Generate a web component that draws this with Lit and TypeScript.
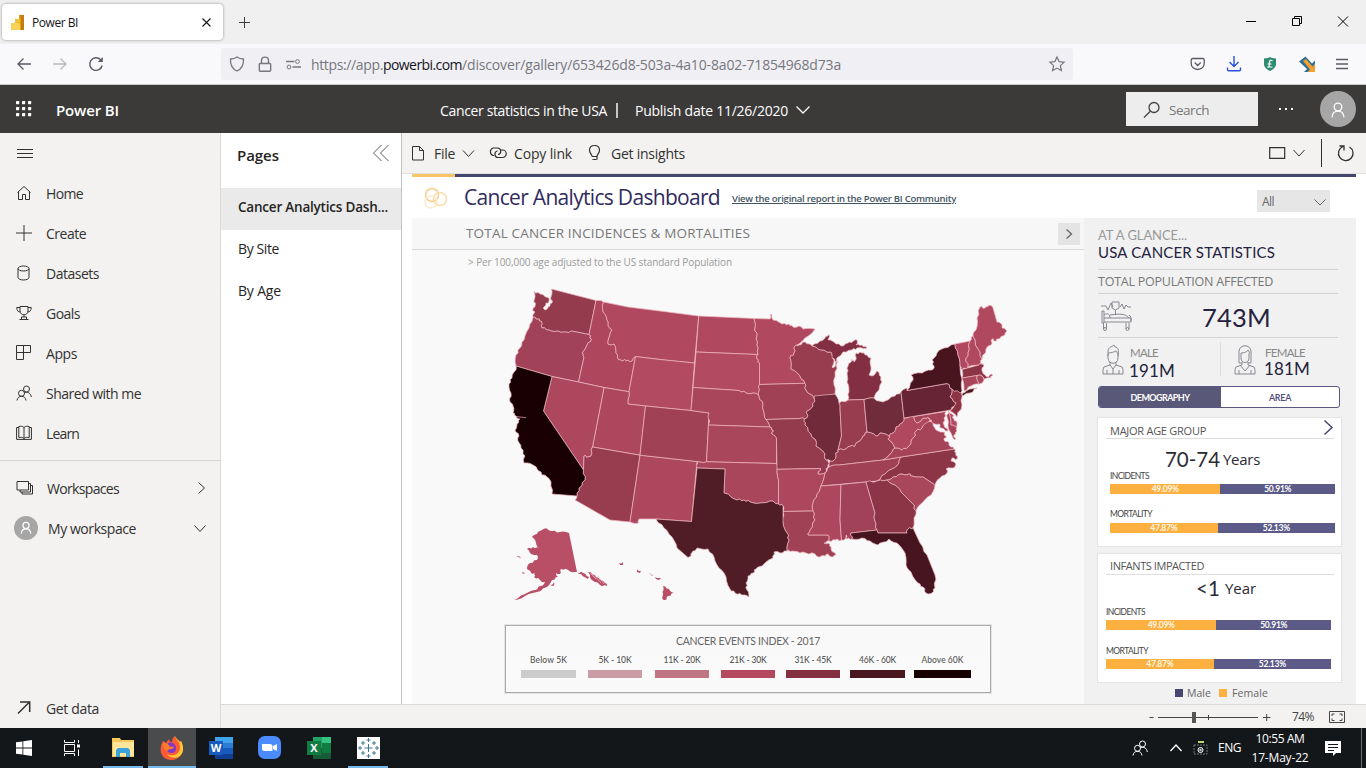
import { LitElement, html, svg, css } from "lit";
import { customElement, property } from "lit/decorators.js";

/** One line of text whose tracking is tuned so it spans a given width. */
@customElement("fit-text")
class FitText extends LitElement {
  @property() text = "";
  @property({ type: Number }) w = 0;
  static styles = css`
    :host { display: inline-block; white-space: nowrap; flex: none; }
    span { display: inline-block; }
    :host(.link) span { text-decoration: underline; text-underline-offset: 1px; }
  `;
  render() { return html`<span>${this.text}</span>`; }
  updated() {
    const s = this.renderRoot.querySelector("span") as HTMLElement;
    s.style.letterSpacing = "0px";
    const natural = s.getBoundingClientRect().width;
    if (this.w && natural) s.style.letterSpacing = `${((this.w - natural) / this.text.length).toFixed(3)}px`;
  }
}

const t = (text: string, w: number, cls = "") => html`<fit-text class=${cls} .text=${text} .w=${w}></fit-text>`;
const icon = (w: number, h: number, body: unknown, cls = "") =>
  html`<svg class="ico ${cls}" width=${w} height=${h} viewBox="0 0 ${w} ${h}">${body}</svg>`;

/* ---------- map geometry: one outline per state ---------- */
const STATES: [string, string][] = [
  ["#943b4e", "534,291.5 540,294 548,297.5 549,301 546,303 543,308 545,310 548,307 552,303 551,297 551.5,289 596,300.5 589,334.5 574,331.5 566,332 558,331 549,330 542,328 541,321 538,319 533,317.5 534.5,313 533,309 535,306 534.5,299"],
  ["#a24258", "533,317.5 538,319 541,321 542,328 549,330 558,331 566,332 574,331.5 589,334.5 591.5,339 587,345 582,353 584,357 578.5,382 552,376.5 516,366 516,355 520,348 524,340 529,328"],
  ["#ae475e", "596,300.5 603.5,302 603,312 607,320 608,325 612,330 610,335 608,344 611,345 614,344 616,353 619,360 623,360.5 628,360 632,361 635.5,356.5 629,391.7 604,387.5 578.5,382 584,357 582,353 587,345 591.5,339 589,334.5"],
  ["#b0495f", "603.5,302 628,307 660,311 698.7,316 694.5,363 660,359.5 635.5,356.5 632,361 628,360 623,360.5 619,360 616,353 614,344 611,345 608,344 610,335 612,330 608,325 607,320 603,312"],
  ["#b24b62", "635.5,356.5 660,359.5 694.5,363 691,410.5 660,407.5 645.5,406 628,404 629,391.7"],
  ["#ad475e", "604,387.5 629,391.7 628,404 645.5,406 640,455.2 592.5,447"],
  ["#ad475e", "552,376.5 578.5,382 604,387.5 592.5,447 591,456 588,457 584,456 583.5,470 543.5,411"],
  ["#983d50", "592.5,447 640,455.2 630,522 610,520 575,500 577,496 579,488 585,480 583.5,470 584,456 588,457 591,456"],
  ["#ad475e", "640,455.2 697,461.5 691.5,521.5 656,519 639,519 638.5,523 630,522"],
  ["#a04155", "645.5,406 660,407.5 691,410.5 709,413 706.5,461.8 697,461.5 640,455.2"],
  ["#b0495f", "698.7,316 754,318.5 755,328 757,336 757,345 758,354.5 696,352"],
  ["#b24b62", "696,352 758,354.5 757,359 759.5,363 759.5,384.5 758.5,392 759,396 753,393 746,393 739,390.5 693,387.5"],
  ["#a9465b", "693,387.5 739,390.5 746,393 753,393 759,396 763,405 764,412 766,419.5 770,427 708.5,425 709,413 691,410.5"],
  ["#a9465b", "708.5,425 770,427 773,430 772,434 776.5,438 776.5,463.5 706.5,461.8"],
  ["#a9465b", "697,461.5 706.5,461.8 776.5,463.5 777,469.3 778.5,480 778.5,504 770,501 760,503 750,502 744,500 737,500 730,496 724,493 725,469 697,468"],
  ["#b0495f", "754,318.5 770,319 770,314 772,315 773,320 782,324 789,324 793,327 799,326 803,329 815,329 805,338 795,346 794,353 790,358 791,369 800,376 805,383.3 759.5,384.5 759.5,363 757,359 758,354.5 757,345 757,336 755,328"],
  ["#a04155", "759.5,384.5 805,383.3 806,390 810,394 814.5,399 813,406 807,411 808,415 804.5,419 800,418.5 766,419.5 764,412 763,405 759,396 758.5,392"],
  ["#953b4e", "766,419.5 800,418.5 804.5,419 805,425 811,434 815,439 816,446 825,454 826,460 830,463 828,467 825,473 818,474 820.5,468.5 777,469.3 776.5,438 772,434 773,430 770,427"],
  ["#ad475e", "777,469.3 820.5,468.5 818,474 825,473 821,486 817,494 813,503 813,511 783,511.5 783,506 778.5,504 778.5,480"],
  ["#a04155", "783,511.5 813,511 815,520 810,530 808,535 828,535 829,541 824,543 830,544 831,549 836,555 833,557 828,554 825,556 820,557 815,554 806,553 800,553 792,551 787,551 789,540 787,533 783,523"],
  ["#983d50", "795,346 799,345 805,342 812,346 818,349 824,350 830,352 832,355 834,360 832,367 833,368 838,361 835,372 834,385 835,394 814.5,399 810,394 806,390 805,383.3 800,376 791,369 790,358 794,353"],
  ["#702a3a", "814,396 835,394 839,403 840,408 841.5,436 838,450 836,455 834,460 830,461 826,460 825,454 816,446 815,439 811,434 805,425 804.5,419 808,415 807,411 813,406 814.5,399"],
  ["#822f42", "848,400 849,392 847,382 847,373 848,366 852,359 854,362 856,357 856,353 862,353 867,355 871,358 871,367 869,375 872,376 877,371 881,377 882,382 879,390 874,398 864,399.5"],
  ["#822f42", "812,346 820,341 825,338 829,334.5 828,340 834,342 841,346 848,343 853,341.5 857,340 856,345 862,345 867,348 857,348 852,350 843,352 838,357 835,362 832,355 830,352 824,350 818,349"],
  ["#983d50", "839,403 848,400 864,399.5 867,432 863,436 858,442 855,446 851,446 846,449 838,450 841.5,436 840,408"],
  ["#702c3b", "864,399.5 874,398 879,401 885,401 895,396 901,392 904,418 902,423 899,426 896,427 893,433 889,436 880,433 876,436 867,432"],
  ["#983d50", "867,432 876,436 880,433 889,436 889,440 895,448 890,454 883,460 839,465 829,467 830,461 834,460 836,455 838,450 846,449 851,446 855,446 858,442 863,436"],
  ["#a04155", "829,467 839,465 883,460 901,457 899,463 892,469 885,474 877,481 821,486 825,473"],
  ["#8c3547", "901,457 954,449 956,453 957,459 952,458 951,461 956,464 953,468 946,469 947,473 940,478 935,485 923,477 912,476 909,474 902,474 893,477 887,480 877,481 885,474 892,469 899,463"],
  ["#a8465b", "887,480 893,477 902,474 909,474 912,476 923,477 935,485 931,495 922,503 916,511 912,503 901,492 895,485"],
  ["#a54459", "883,460 890,454 895,448 902,450 908,447 914,437 916,431 922,428 927,420 933,423 936,430 943,432 946,436 944,440 949,443 951,447 954,449 901,457"],
  ["#b0495f", "895,448 889,440 889,436 893,433 896,427 899,426 902,423 904,418 914,416.5 917,423 922,419 928,417 930,420 926,423 922,428 916,431 914,437 908,447 902,450"],
  ["#a54459", "914,416.5 946,411.5 944,418 944,425 948,431 941,428 939,424 933,423 930,420 928,417 922,419 917,423"],
  ["#a54459", "948.5,411.5 951,425 957,426 957,431 954,435 955,440 951,433 948,425 947,417"],
  ["#b0495f", "948.5,411.5 952,414 954,419 957,423 957,426 951,425"],
  ["#672434", "901,392 907,388 907,390.5 947,383.5 952,389 950,397 956,403 951,410 904,418"],
  ["#8b3446", "952,389 961,392 962,405 957,417 950,411 956,403 950,397"],
  ["#48151f", "907,390.5 913,380 911,375 922,373 932,370 934,366 932,360 937,353 944,348 955,344 958,355 960,366 962,379 962,391 960,393 952,389 947,383.5"],
  ["#48151f", "962,395 966,391 977,388 970,393 963,396"],
  ["#b0495f", "955,344 970,341 968,353 966,358 968,367 962,369.5 960,366 958,355"],
  ["#b0495f", "970,341 973,336 978,349 982,359 979,365 968,367 966,358 968,353"],
  ["#b0495f", "973,336 976,330 977,318 980,307 985,308 989,305 993,308 997,322 1002,325 1002,328 1007,331 1003,336 998,339 995,341 992,339 991,345 986,349 982,359 978,349"],
  ["#8b3446", "962,369.5 979,365 982,363 984,366 982,371 987,377 992,374 991,378 984,379 980,375 962,378"],
  ["#a8465b", "962,378 977,375.5 979,384 971,386 964,391"],
  ["#a8465b", "977,375.5 980,375 984,380 979,384"],
  ["#ad475e", "821,486 841,484.5 840,520 841.5,540 835,540 829,541 828,535 808,535 810,530 815,520 813,511 813,503 817,494"],
  ["#a24258", "841,484.5 866,482 875,513 875,521 877,530 851,533 852,539 847,539 846,535 844,540 841.5,540 840,520"],
  ["#8c3547", "866,482 877,481 887,480 895,485 901,492 912,503 916,511 914,518 913,528 908,529 907,533 878,533 877,530 875,521 875,513"],
  ["#47151f", "851,533 877,530 878,533 907,533 908,529 913,528 920,543 927,555 935,575 935,588 932,593 926,593 923,587 918,583 911,572 906,565 905,553 897,543 889,539 884,542 878,545 870,541 862,538 852,539"],
  ["#501c25", "697,468 725,469 724,493 730,496 737,500 744,500 750,502 760,503 770,501 778.5,504 783,506 783,523 787,533 789,540 787,551 780,553 774,552 773,558 762,566 756,569 753,573 748,576 746,583 747,590 749,597 742,595 735,593 730,589 726,577 719,568 714,557 708,549 697,548 693,551 691,556 688,557.5 677,548 672,537 664,528 656,519 691.5,521.5"],
  ["#190003", "516,366 552,376.5 543.5,411 583.5,470 585,480 579,488 577,496 552,494 551,482 547,477 542,475 541,472 533,465 524,463 525,456 521,448 518,441 519,436 515,430 517,424 520,419 516,416 513,413 513,406 510,402 511,393 509,384 512,378 515,371"],
];
const ISLES: string[] = [
  "532,537 537,534 540,531 547,528.5 552,531 560,532 569,533 577,572 583,573 589,577 588,579 581,574 575,572 568,570 561,569 560,574 556,573 558,577 552,580 547,587 537,592 525,596 514,600 525,594 535,590 541,586 545,582 540,580 538,578 534,577 535,573 531,573 527,569 530,563 537,560 537,555 530,553 527,549 533,547 539,548 536,543",
  "588,572 595,575 600,580 605,583 607,586 600,585 595,582 590,577",
  "619,563 623,562 623,565 620,565", "637,569 641,571 640,573 637,572",
  "649,574 653,574.5 652,576", "655,577 661,578 659,580 656,579", "663,586 669,589 674,593 668,596 665,600 662,598 662.5,592",
  "550,585 554,582 553,586", "522,572 525,573 523,574", "516,556 521,558 518,557",
];

/** Breaks short river and coast segments with a small kink; identical for both neighbours of an edge. */
const roughen = (points: string) => {
  const p = points.split(" ").map((s) => s.split(",").map(Number));
  return p.map((a, k) => {
    const b = p[(k + 1) % p.length];
    const dx = b[0] - a[0], dy = b[1] - a[1], len = Math.hypot(dx, dy);
    if (len < 3.5 || len > 14) return `${a[0]},${a[1]}`;
    const flip = dx < 0 || (dx === 0 && dy < 0) ? -1 : 1;
    const off = (f: number) => {
      const x = a[0] + dx * f, y = a[1] + dy * f;
      const r = Math.sin((x + y) * 12.7 + x * y * 0.37);
      const d = Math.sign(r) * (0.35 + Math.abs(r) * 0.55) * flip;
      return `${(x - (dy / len) * d).toFixed(1)},${(y + (dx / len) * d).toFixed(1)}`;
    };
    return `${a[0]},${a[1]} ${off(1 / 3)} ${off(2 / 3)}`;
  }).join(" ");
};

const LEGEND: [string, string, number, number, number][] = [
  ["Below 5K", "#cccccc", 37, 55, 521], ["5K - 10K", "#c99ca6", 33, 54, 588], ["11K - 20K", "#bf7682", 37, 54, 655],
  ["21K - 30K", "#b54a5f", 37, 54, 721], ["31K - 45K", "#823042", 37, 54, 786], ["46K - 60K", "#4a1620", 37, 55, 850], ["Above 60K", "#170003", 42, 57, 914],
];

const person = svg`<circle cx="8" cy="5" r="3.8"/><path d="M2 15.200c.4-3.800 2.800-6 6-6s5.600 2.200 6 6"/>`;
const people = svg`<circle cx="10.500" cy="4" r="3"/><path d="M8 8.300c3.500-2.600 7 .2 7.300 3.700"/><circle cx="5.500" cy="8.300" r="3"/><path d="M1 15.500c.4-2.700 2-4.200 4.500-4.200S9.600 12.800 10 15.500"/>`;

const NAV: [string, number, unknown][] = [
  ["Home", 37, svg`<path d="M1.500 7.500 8 1.500l6.500 6M2.500 6.800v7.700h4V9.500h3v5h4V6.800"/>`],
  ["Create", 40, svg`<path d="M8 0v16M0 8h16"/>`],
  ["Datasets", 53, svg`<ellipse cx="7.500" cy="3.500" rx="5.500" ry="2.500"/><path d="M2 3.500v9c0 1.400 2.500 2.500 5.500 2.500s5.500-1.100 5.500-2.500v-9"/>`],
  ["Goals", 34, svg`<path d="M4 1.500h8v4.500c0 5-8 5-8 0zM4 2.500H.8c0 3 1.200 4.500 3.600 4.500M12 2.500h3.200c0 3-1.200 4.500-3.600 4.500M8 10v2M5.500 12h5v2.500h-5zM3.500 14.500h9"/>`],
  ["Apps", 31, svg`<path d="M.5.500h14v7H.5zM.5 7.500v7h7V.5"/>`],
  ["Shared with me", 95, people],
  ["Learn", 33, svg`<path d="M8 2.500C6.500 1 4.500 1 2.800 1.500v11c1.800-.3 3.700-.3 5.200 1 1.500-1.300 3.400-1.300 5.200-1v-11C11.500 1 9.500 1 8 2.500v11M2.800 2.500H.6v11.900h14.800V2.500h-2.200"/>`],
];

@customElement("app-root")
class AppRoot extends LitElement {
  static styles = css`
    :host { display: block; width: 1366px; height: 768px; overflow: hidden; font-family: "Open Sans", "Noto Sans", sans-serif; font-size: 14px; line-height: 1; color: #323130; background: #fff; }
    * { box-sizing: border-box; }
    .ico { display: block; flex: none; fill: none; stroke: currentColor; stroke-width: 1; overflow: visible; }
    .row { display: flex; align-items: center; }
    .grow { flex: 1; }
    .tabs { height: 44px; background: #f0f0f0; display: flex; padding: 4px 0 0 2px; }
    .tab { width: 221px; height: 36px; background: #fff; border-radius: 4px; box-shadow: 0 0 3px rgba(0,0,0,.4); padding: 0 12px 0 8px; font-size: 12px; color: #15141a; }
    .tab .name { margin: 2px 0 0 7px; }
    .newtab { margin: 13px 0 0 16px; color: #3c3c42; }
    .wins { display: flex; gap: 36px; margin: 12px 18px 0 0; color: #000; }
    .bar { height: 41px; background: #f9f9fb; border-bottom: 1px solid #c9c9cc; padding-left: 17px; color: #5b5b66; }
    .bar .b2 { margin-left: 20px; color: #b9b9bd; } .bar .b3 { margin-left: 21px; }
    .url { width: 852px; height: 32px; margin-left: 117px; padding: 0 8px; background: #f0f0f4; border-radius: 3px; font-size: 14px; color: #77777e; }
    .url fit-text { margin-top: 2px; }
    .url .dark { color: #15141a; }
    .url .lock { margin-left: 13px; } .url .perm { margin: 0 10px 0 14px; }
    .exts { gap: 19.500px; margin-right: 17px; }
    .head { height: 48px; background: #3b3a39; color: #fff; padding: 3px 10px 0 16px; }
    .brand { margin-left: 24px; font-size: 15px; font-weight: 600; width: 384px; }
    .head .pipe { width: 2px; height: 15px; background: #c8c6c4; margin: 0 17px 0 9px; }
    .head .chev { margin-left: 8px; margin-top: -1px; }
    .search { width: 132px; height: 34px; background: #ededed; margin: -3px 21px 0 0; padding: 2px 0 0 17px; color: #777; font-size: 13.500px; }
    .search .ico { color: #444; margin-right: 9px; } .search fit-text { margin-top: 2px; }
    .dots { margin: -4px 26px 0 0; }
    .avatar { border-radius: 50%; background: #a6a6a6; display: flex; align-items: center; justify-content: center; flex: none; color: #fff; }
    .a36 { width: 36px; height: 36px; margin-top: -4px; padding-top: 3px; } .a24 { width: 24px; height: 24px; margin: -2px -4px 0 -2px; }
    .main { height: 595px; display: flex; }
    .nav { width: 221px; background: #f3f2f1; border-right: 1px solid #dcdad8; display: flex; flex-direction: column; }
    .burger { margin: 16px 0 16px 17px; color: #323130; }
    .item { height: 40px; padding: 0 14px 0 16px; gap: 14px; }
    .item .ico { margin-top: -2px; }
    .sep { height: 1px; background: #d8d6d4; margin: 6px 0 8px; }
    .get { margin-top: auto; margin-bottom: -1px; }
    .right { flex: 1; min-width: 0; display: flex; flex-direction: column; }
    .work { height: 571px; display: flex; }
    .pages { width: 181px; border-right: 1px solid #c4c2c0; background: #fff; color: #252423; }
    .ptitle { height: 55px; font-weight: 600; font-size: 15px; padding: 0 12px 10px 16px; justify-content: space-between; align-items: center; display: flex; }
    .ptitle .ico { margin-top: -6px; color: #605e5c; }
    .page { height: 42px; padding-left: 17px; padding-bottom: 5px; }
    .sel { background: #eaeaea; font-weight: 600; font-size: 13.500px; padding-bottom: 3px; }
    .report { flex: 1; display: flex; flex-direction: column; }
    .tools { height: 41px; background: #f3f2f1; border-bottom: 1px solid #e1dfdd; padding: 0 11px 0 10px; }
    .tools .lab { margin-left: 8px; margin-top: 2px; } .tools .file { margin-left: 10px; } .tools .copy { margin-left: 6px; }
    .canvas { width: 944px; margin-left: 10px; height: 530px; display: flex; flex-direction: column; }
    .stripe { height: 3px; display: flex; } .stripe .y { width: 43px; background: #fac468; } .stripe .v { flex: 1; background: #464673; }
    .dash { height: 41px; padding: 0 26px 0 11px; color: #312b5e; }
    .dtitle { font-size: 21px; margin: 0 12px 1px 16px; }
    .link { font-size: 9.500px; font-weight: 600; color: #425563; margin-top: 2px; }
    .all { width: 73px; height: 22px; background: #e6e6e6; font-size: 12px; color: #666; padding: 2px 4px 0 5px; justify-content: space-between; margin-top: 6px; display: flex; align-items: center; }
    .body { display: flex; height: 486px; }
    .left { width: 672px; background: #f9f9f9; display: flex; flex-direction: column; align-items: flex-start; }
    .sub { width: 672px; height: 32px; background: #f7f7f7; border-bottom: 1px solid #d8d8d8; padding: 0 4px 0 54px; color: #777; font-size: 13.500px; }
    .next { width: 22px; height: 22px; background: #e4e4e4; display: flex; align-items: center; justify-content: center; color: #666; }
    .note { font-size: 10px; color: #999; margin: 7px 0 0 56px; height: 23px; }
    .map { display: block; margin-left: 68px; stroke: #eeb4bf; stroke-width: .7; stroke-linejoin: round; }
    .legend { width: 486px; height: 68px; margin: 15px 0 0 93px; border: 1.500px solid #ababab; outline: 1px solid #e4e4e4; outline-offset: 0; display: flex; flex-direction: column; align-items: center; padding-top: 9px; font-family: Lato, sans-serif; }
    .lt { font-size: 10.500px; color: #666; height: 20px; margin-top: 1px; }
    .keys { display: flex; align-self: stretch; padding-left: 15px; background: #fafafa; }
    .key { display: flex; flex-direction: column; align-items: center; font-size: 8.500px; font-weight: 500; color: #555; flex: none; height: 24px; }
    .key i { height: 8px; margin-top: 5px; display: block; width: 100%; }
    .side { width: 272px; background: #f1f1f1; padding-left: 14px; color: #777; display: flex; flex-direction: column; }
    .glance { font-family: Lato, sans-serif; font-size: 13px; color: #999; height: 14px; margin-top: 11px; }
    .stat { font-family: Lato, sans-serif; font-size: 15px; color: #24223e; height: 24px; margin-top: 2px; }
    .hr { height: 1px; width: 240px; background: #d2d2d2; }
    .total { height: 23px; font-size: 12.500px; color: #777; padding-top: 2px; }
    .big { height: 43px; padding-left: 3px; color: #878792; }
    .num { font-family: Lato, sans-serif; font-size: 25.500px; color: #24223e; margin: 5px 0 0 70px; }
    .sexes { height: 48px; width: 240px; color: #878792; padding-left: 4px; display: flex; align-items: flex-start; }
    .sexes .ico { margin-top: 7px; }
    .sx { width: 90px; margin-left: 6px; padding-top: 9px; display: flex; flex-direction: column; flex: none; font-size: 11.500px; color: #888; font-family: Lato, sans-serif; }
    .sx.fe { width: 50px; margin-left: 9px; }
    .sx .n { font-size: 17px; color: #24223e; margin: 3px 0 0 -1px; } .sx.fe .n { margin-top: 1px; }
    .vr { width: 1px; height: 34px; background: #dcdcdc; margin: 4px 13px 0 0; flex: none; }
    .btns { width: 242px; height: 22px; border: 1px solid #5a5882; border-radius: 3px; background: #fff; display: flex; font-size: 9px; color: #4b4a75; overflow: hidden; font-family: Lato, sans-serif; font-weight: 600; padding: 0; }
    .btns div { flex: 1; display: flex; align-items: center; justify-content: center; padding-top: 1px; } .btns .on { flex: none; width: 122px; background: #5a5878; color: #fff; font-weight: 700; }
    .card { width: 245px; height: 130px; margin: 9px 0 0 -1px; background: #fff; border: 1px solid #e3e3e3; padding: 0 7px 0 12px; color: #555; }
    .ch { height: 21px; padding-top: 3px; margin-left: -4px; padding-left: 4px; border-bottom: 1px solid #dedede; font-size: 11px; color: #555; justify-content: space-between; display: flex; align-items: center; }
    .c1 .ch { padding-top: 5px; }
    .ch .ico { margin: -6px 1px 0 0; }
    .age { height: 32px; padding-top: 8px; display: flex; align-items: center; justify-content: flex-start; color: #2b2a35; gap: 3px; }
    .age.m { padding-left: 55px; } .age.i { padding: 0 0 5px 86px; gap: 5px; }
    .age .a1 { font-family: Lato, sans-serif; font-size: 20.500px; } .age .a2 { font-size: 15px; }
    .lb { font-family: Lato, sans-serif; font-size: 8.500px; color: #444; height: 13px; padding-top: 1px; }
    .br { height: 10px; width: 225px; display: flex; font-family: Lato, sans-serif; font-size: 8.500px; font-weight: 700; color: #fff; }
    .br div { display: flex; align-items: center; justify-content: center; }
    .br .f { background: #fbb040; color: #fff6e4; } .br .ml { flex: 1; background: #5c5b87; }
    .gap { height: 14px; margin-top: 15px; }
    .c2 { margin-top: 6px; } .c2 .bars { margin-left: -4px; } .c2 .lb { height: 13px; }
    .c2 .gap { margin-top: 16px; height: 13px; }
    .mf { font-size: 10.500px; color: #666; margin: 5px 0 0 77px; display: flex; align-items: center; }
    .mf i { width: 8px; height: 8px; background: #464673; margin-right: 4px; } .mf i.o { background: #fbb040; margin: 0 5px 0 8px; }
    .status { height: 24px; background: #f3f2f1; border-top: 1px solid #dcdad8; justify-content: flex-end; padding-right: 21px; color: #444; font-size: 12px; }
    .task { height: 40px; background: #14171a; color: #fff; display: flex; }
    .cell { width: 49px; height: 40px; display: flex; align-items: center; justify-content: center; flex: none; border-bottom: 2px solid transparent; padding-top: 1px; }
    .c48 { width: 48px; } .open { border-bottom-color: #76b9ed; width: 40px; margin: 0 5px 0 7px; } .last { margin-left: 5px; } .act { background: #4a4b4d; border-bottom-color: #76b9ed; width: 48px; }
    .tray { font-size: 12px; } .clock { display: flex; flex-direction: column; align-items: center; gap: 7px; width: 58px; margin: 0 16px 0 10px; }
    .peek { width: 1px; height: 40px; background: #6b6b6b; margin: 0 4px 0 20px; }
  `;

  bar(f: string, m: string, pct: number) {
    return html`<div class="br"><div class="f" style="width:${pct}%">${t(f, 27)}</div><div class="ml">${t(m, 27)}</div></div>`;
  }

  card(cls: string, title: any, age: any, pts: unknown) {
    return html`<div class="card ${cls}"><div class="ch">${title}${pts}</div>${age}
      <div class="bars"><div class="lb">${t("INCIDENTS", 39)}</div>${this.bar("49.09%", "50.91%", 49.09)}
      <div class="lb gap">${t("MORTALITY", 42)}</div>${this.bar("47.87%", "52.13%", 47.87)}</div></div>`;
  }

  render() {
    return html`
      <div class="tabs">
        <div class="tab row">
          ${icon(15, 17, svg`<g stroke="none"><path d="M9 1h5v15H6V5h3z" fill="#e0a010"/><path d="M5 5h5v11H5z" fill="#f2c037"/><path d="M1 9h6l3 2v5H1z" fill="#f7d25a"/><path d="M10 1h4v15h-3V5z" fill="#c27d0c"/></g>`)}
          <span class="name">${t("Power BI", 46)}</span><span class="grow"></span>
          ${icon(9, 9, svg`<path stroke-width="1.100" d="m.5.500 8 8m0-8-8 8"/>`)}
        </div>
        ${icon(11, 11, svg`<path d="M5.500 0v11M0 5.500h11"/>`, "newtab")}
        <span class="grow"></span>
        <div class="wins">
          ${icon(10, 11, svg`<path d="M0 5.500h10"/>`)}
          ${icon(10, 11, svg`<path d="M.5 2.500h7v7h-7zM2.500 2.500v-2h7v7h-2"/>`)}
          ${icon(10, 11, svg`<path d="m0 .5 10 10m0-10-10 10"/>`)}
        </div>
      </div>
      <div class="bar row">
        ${icon(14, 12, svg`<path stroke-width="1.300" d="M14 6H1M6.500.500 1 6l5.500 5.500"/>`)}
        ${icon(16, 12, svg`<path stroke-width="1.300" d="M2 6h13M9.500.500 15 6l-5.500 5.500"/>`, "b2")}
        ${icon(16, 16, svg`<path stroke-width="1.400" d="M14.200 9.500A6.300 6.300 0 1 1 12.500 3.600l1 1"/><path d="M14.800 1v5h-5z" fill="currentColor" stroke="none"/>`, "b3")}
        <div class="url row">
          ${icon(16, 16, svg`<path stroke-width="1.300" d="M8 1c2 1.500 4.300 2 6.500 2 .3 5.500-2 10-6.500 12C3.500 13 1.200 8.500 1.500 3 3.700 3 6 2.500 8 1z"/>`)}
          ${icon(14, 16, svg`<path stroke-width="1.400" d="M2.200 7.500h9.600c.6 0 .9.400.9.900v5.600c0 .8-.4 1.200-1.200 1.200h-9c-.8 0-1.200-.4-1.200-1.200V8.400c0-.5.300-.9.900-.9zM3.500 7.500V4.500c0-4.500 7-4.500 7 0v3"/>`, "lock")}
          ${icon(15, 10, svg`<path stroke-width="1.300" d="M0 2.500h8.500M6.500 8H15"/><circle cx="11.500" cy="2.500" r="1.900"/><circle cx="3" cy="8" r="1.900"/>`, "perm")}
          ${t("https://app.", 72)}${t("powerbi.com", 79, "dark")}${t("/discover/gallery/653426d8-503a-4a10-8a02-71854968d73a", 379)}
          <span class="grow"></span>
          ${icon(16, 16, svg`<path stroke-width="1.200" d="m8 1 2.100 4.600 5 .6-3.700 3.400 1 5L8 12.100l-4.400 2.500 1-5L.900 6.200l5-.6z"/>`)}
        </div>
        <span class="grow"></span>
        <div class="exts row">
          ${icon(16, 16, svg`<path transform="translate(.7)" stroke-width="1.300" d="M3 2.500h10c.9 0 1.500.6 1.500 1.500v3.500c0 3.600-2.900 6-6.500 6s-6.500-2.400-6.500-6V4c0-.9.600-1.500 1.500-1.500zM5 6.500l3 3 3-3"/>`)}
          ${icon(18, 16, svg`<path stroke="#2552d8" stroke-width="1.400" d="M9 0v10M4.500 6 9 10.500 13.500 6M2.500 11.500v2c0 .8.4 1.300 1.200 1.300h10.600c.8 0 1.200-.5 1.200-1.300v-2"/>`)}
          ${icon(16, 16, svg`<path fill="#2e8b72" stroke="none" d="M2 2.500c3 0 5-.8 6-1.500 1 .7 3 1.500 6 1.500v5.500c0 3.500-3 5.500-6 7-3-1.500-6-3.500-6-7z"/><path stroke="#fff" stroke-width="1.200" d="M10.500 5c-1.500-1.500-3-.5-3 1L7 10.500c-.5 1-1.500.5-1 .5h4.500M5.500 8h4"/>`)}
          ${icon(18, 16, svg`<path fill="#2f6f95" stroke="none" d="M1 5.500 7.500.500 14 7.500l3-3V16H6l3-3z"/><path fill="#f0a030" stroke="none" d="m5 5 3-2 6.500 7.500L17 8v8H9.500l2.500-2.500z"/>`)}
          ${icon(14, 12, svg`<path stroke-width="1.300" d="M1 1.500h12M1 6h12M1 10.500h12"/>`)}
        </div>
      </div>
      <div class="head row">
        ${icon(16, 20, svg`<g fill="#fff" stroke="none">${[0, 6, 12].map((x) => [0, 6, 12].map((y) => svg`<rect x=${x} y=${y} width="3.200" height="3.200" rx=".6"/>`))}</g>`)}
        <div class="brand">${t("Power BI", 63)}</div>
        ${t("Cancer statistics in the USA", 167)}<i class="pipe"></i>${t("Publish date 11/26/2020", 153)}
        ${icon(14, 8, svg`<path stroke-width="1.300" d="m.5.500 6.500 6.500L13.500.500"/>`, "chev")}
        <span class="grow"></span>
        <div class="search row">${icon(17, 16, svg`<circle cx="11" cy="5.500" r="5" stroke-width="1.300"/><path stroke-width="1.300" d="M7.300 9.200 1 15.500"/>`)}${t("Search", 40)}</div>
        ${icon(15, 4, svg`<g fill="#fff" stroke="none"><rect y="1" width="2" height="2"/><rect x="6" y="1" width="2" height="2"/><rect x="12" y="1" width="2" height="2"/></g>`, "dots")}
        <div class="avatar a36">${icon(16, 17, svg`<g stroke-width="1.300">${person}</g>`)}</div>
      </div>
      <div class="main">
        <div class="nav">
          ${icon(16, 9, svg`<path d="M0 .5h16M0 4.500h16M0 8.500h16"/>`, "burger")}
          ${NAV.map(([n, w, p]) => html`<div class="item row">${icon(16, 16, p)}${t(n, w)}</div>`)}
          <div class="sep"></div>
          <div class="item row">${icon(17, 14, svg`<path d="M1 .5h11.500v8.500H1zM12.500 2.500h2v8.500H4V9M14.500 4.500h2V13H6v-2"/>`)}${t("Workspaces", 72)}<span class="grow"></span>${icon(8, 12, svg`<path d="m.5.500 6 5.500-6 5.500"/>`)}</div>
          <div class="item row"><div class="avatar a24">${icon(14, 14, svg`<g transform="translate(.6 1.500) scale(.8)" stroke-width="1.500">${person}</g>`)}</div>${t("My workspace", 88)}<span class="grow"></span>${icon(12, 7, svg`<path d="m.5.500 5.500 6 5.500-6"/>`)}</div>
          <div class="item row get">${icon(16, 14, svg`<path stroke-width="1.500" d="M2 12.500 13.500 1M4 1h9.700v10"/>`)}${t("Get data", 53)}</div>
        </div>
        <div class="right">
          <div class="work">
            <div class="pages">
              <div class="ptitle">${t("Pages", 42)}${icon(16, 16, svg`<path d="M8.500 0 .5 8l8 8M15.500 0l-8 8 8 8"/>`)}</div>
              <div class="page sel row">${t("Cancer Analytics Dash...", 150)}</div>
              <div class="page row">${t("By Site", 41)}</div>
              <div class="page row">${t("By Age", 43)}</div>
            </div>
            <div class="report">
              <div class="tools row">
                ${icon(12, 16, svg`<path d="M.5 1.500h7l4 4v9.500H.5zM7.500 1.500v4h4"/>`)}
                ${t("File", 21, "lab file")}
                <span>${icon(34, 7, svg`<path d="m8 .500 5.500 6 5.500-6"/>`)}</span>
                ${icon(19, 14, svg`<path stroke-width="1.200" transform="translate(-1)" d="M6 9.500H5a4 4 0 0 1 0-7.500h4.500c4 0 4.500 6 .5 6.500M13 4h1.500a3.700 3.700 0 0 1 0 7.500H10c-4 0-4-6-.5-6.500"/>`)}
                ${t("Copy link", 58, "lab copy")}
                <span>${icon(31, 16, svg`<path stroke-width="1.200" transform="translate(15)" d="M5 11.500h5M5.500 14.500h4M5 11.500C5 9 2.500 8.500 2.500 5.200c0-2.700 2-4.700 5-4.700s5 2 5 4.700c0 3.300-2.500 3.800-2.500 6.300v3"/>`)}</span>
                ${t("Get insights", 74, "lab")}
                <span class="grow"></span>
                ${icon(40, 12, svg`<path stroke-width="1.200" d="M4.700.700h15v10.600h-15z"/><path d="m28.500 3 5.500 6 5.500-6"/>`)}
                ${icon(32, 28, svg`<path d="M16.500 0v28"/>`)}
                ${icon(18, 18, svg`<path stroke-width="1.300" transform="translate(1)" d="M5 2.500a7.300 7.300 0 1 0 6.500.5M1.500 2H6v4.500"/>`)}
              </div>
              <div class="canvas">
                <div class="stripe"><div class="y"></div><div class="v"></div></div>
                <div class="dash row">
                  ${icon(25, 22, svg`<g stroke="#f8cf8c" stroke-width="1.500"><circle cx="9" cy="8" r="6.500"/><circle cx="17" cy="12" r="6.500" stroke="#fbdcab"/><circle cx="8" cy="15" r="6" stroke="#fde9cb"/></g>`)}
                  ${t("Cancer Analytics Dashboard", 256, "dtitle")}${t("View the original report in the Power BI Community", 224, "link")}
                  <span class="grow"></span>
                  <div class="all">${t("All", 12)}${icon(12, 7, svg`<path d="m.5 1.500 5.500 5.500 5.500-5.500"/>`)}</div>
                </div>
                <div class="body">
                  <div class="left">
                    <div class="sub row">${t("TOTAL CANCER INCIDENCES & MORTALITIES", 284)}<span class="grow"></span><div class="next">${icon(6, 10, svg`<path stroke-width="1.300" d="m.5.500 5 4.500-5 4.500"/>`)}</div></div>
                    <div class="note">${t("> Per 100,000 age adjusted to the US standard Population", 264)}</div>
                    <svg class="map" width="530" height="330" viewBox="480 280 530 330">
                      ${STATES.map(([c, p]) => svg`<polygon fill=${c} points=${roughen(p)}/>`)}
                      ${ISLES.map((p) => svg`<polygon fill="#b84f66" stroke="none" points=${roughen(p)}/>`)}
                      <path d="m590 573 6 6m-3-5 8 9m-3-7 6 8M516 416.500l10 1.200" fill="none"/>
                    </svg>
                    <div class="legend">
                      <div class="lt">${t("CANCER EVENTS INDEX - 2017", 144)}</div>
                      <div class="keys">${LEGEND.map(([n, c, w, bw, x], k) => html`<div class="key" style="width:${bw}px;margin-right:${k < 6 ? LEGEND[k + 1][4] - x - bw : 0}px">${t(n, w)}<i style="background:${c}"></i></div>`)}</div>
                    </div>
                  </div>
                  <div class="side">
                    <div class="glance">${t("AT A GLANCE...", 89)}</div>
                    <div class="stat">${t("USA CANCER STATISTICS", 177)}</div>
                    <div class="hr"></div>
                    <div class="total row">${t("TOTAL POPULATION AFFECTED", 175)}</div>
                    <div class="hr"></div>
                    <div class="big row">
                      ${icon(31, 30, svg`<path d="M0 5h5l2 4 3-7 2 4M19 6l2-3 2 5 2-4 2 2h3M11 1h7v6l-3.500 2L11 7zM14.500 9v5M1 10h2v12H1zM3 17h27v4H3M3 14c4-3 6 0 6 3M9 14c8-1 15-2 19 3M2.500 22v6m3 0v-6M25 22v6m3 0v-6M28 14c2 1 2 3 2 6"/><circle cx="4" cy="28" r="1.500"/><circle cx="26.500" cy="28" r="1.500"/>`)}
                      ${t("743M", 69, "num")}
                    </div>
                    <div class="hr"></div>
                    <div class="sexes">
                      ${icon(22, 30, svg`<path d="M6 11V5c2-4 4-3 6-5l1 2c3 0 4 3 3 9M6 8c3 0 6-1 8-2l2 3M6 9v4c0 7 10 7 10 0V9M8 17v3l-6 2c-1 1-1 3-1 7h20c0-4 0-6-1-7l-6-2v-3M8 20l3 4 3-4M11 24v5M5 25v4M17 25v4"/>`)}
                      <div class="sx">${t("MALE", 28)}${t("191M", 46, "n")}</div>
                      <div class="vr"></div>
                      ${icon(22, 30, svg`<path d="M5 18V6c1-7 11-7 12 0v12M7 8c3 0 6-1 7-3l2 3M7 8v5c0 6 8 6 8 0V8M5 18h3M17 18h-3M8 17v3l-6 2c-1 1-1 3-1 7h20c0-4 0-6-1-7l-6-2v-3M6 20l5 6 5-6M5 25v4M17 25v4"/>`)}
                      <div class="sx fe">${t("FEMALE", 40)}${t("181M", 46, "n")}</div>
                    </div>
                    <div class="btns"><div class="on">${t("DEMOGRAPHY", 59)}</div><div>${t("AREA", 22)}</div></div>
                    ${this.card("c1", t("MAJOR AGE GROUP", 96), html`<div class="age m">${t("70-74", 55, "a1")}${t("Years", 37, "a2")}</div>`, icon(9, 15, svg`<path stroke="#464673" stroke-width="1.500" d="m.5.500 7.500 7-7.500 7"/>`))}
                    ${this.card("c2", t("INFANTS IMPACTED", 94), html`<div class="age i">${t("<1", 24, "a1")}${t("Year", 31, "a2")}</div>`, "")}
                    <div class="mf"><i></i>${t("Male", 24)}<i class="o"></i>${t("Female", 36)}</div>
                  </div>
                </div>
              </div>
            </div>
          </div>
          <div class="status row">
            ${icon(143, 12, svg`<path d="M20.500 6h4M29 6h100" transform="translate(0 .5)"/><path fill="#555" stroke="none" d="M63 1h4v11h-4z"/><path d="M79.500 4v5M134 6.500h7.500M137.700 3v7"/>`)}
            <span>${icon(20, 1, "")}</span>${t("74%", 22)}<span>${icon(15, 1, "")}</span>
            ${icon(16, 12, svg`<path d="M.5.500h15v11H.5zM3 5V3h2.500M10.500 3H13v2M13 7.500V9.500h-2.500M5.500 9.500H3V7.500"/>`)}
          </div>
        </div>
      </div>
      <div class="task">
        <div class="cell c48">${icon(16, 16, svg`<path fill="#fff" stroke="none" d="M0 2.300 6.500 1.400v6.200H0zM7.300 1.300 16 0v7.600H7.300zM0 8.400h6.500v6.200L0 13.700zM7.300 8.400H16V16l-8.700-1.200z"/>`)}</div>
        <div class="cell c48">${icon(16, 16, svg`<path d="M.5 0v2.500h10V0M.5 4.500h10v7H.5zM.5 16v-2.500h10V16M14.500 0v3M14.500 9.500V16"/><path fill="#fff" stroke="none" d="M13 4.500h3v3h-3z"/>`)}</div>
        <div class="cell open">${icon(22, 19, svg`<g stroke="none"><path fill="#f6c95a" d="M0 0h8l1 2h13v17H0z"/><path fill="#ffe69a" d="M1 4h21v14H1z"/><path fill="#3aa3dc" d="M4 19v-7l2-2h10l2 2v7h-4v-4H8v4z"/></g>`)}</div>
        <div class="cell act">${icon(24, 24, svg`<g stroke="none"><path fill="#ff5a36" d="M3 5c1 1 2 1 3 2l3-4c0 2 1 3 3 3 0-3 1-5 3-6 0 3 3 4 5 6l1-1c3 8 2 18-9 19C1 24-2 14 3 5z"/><path fill="#ffc533" d="M15 0c0 4 5 5 5 11 0 8-8 10-13 7 5 7 17 4 16-6 0-3-1-5-2-7l-1 1c-1-2-4-3-5-6z"/><path fill="#8038c9" d="M6 11c0-4 5-6 8-3 4 3 2 10-3 9-3 0-5-3-5-6z"/><path fill="#ff7c2a" d="M2 8c3-2 7 0 8 3 2-1 4 0 4 1-2 0-2 2-5 1-1 3-4 2-5-1z"/></g>`)}</div>
        <div class="cell">${icon(24, 22, svg`<g stroke="none"><path fill="#41a5ee" d="M6 0h18v6H6z"/><path fill="#2b7cd3" d="M6 6h18v5H6z"/><path fill="#185abd" d="M6 11h18v6H6z"/><path fill="#103f91" d="M6 17h18v5H6z"/><path fill="#185abd" d="M0 4h14v14H0z"/><text x="7" y="15" text-anchor="middle" font-size="11" font-weight="700" fill="#fff">W</text></g>`)}</div>
        <div class="cell">${icon(23, 23, svg`<g stroke="none"><rect width="23" height="23" rx="7" fill="#4a8cff"/><path fill="#fff" d="M4 8h8c1.500 0 2.500 1 2.500 2v5h-8C5 15 4 14 4 13zM15 10l4-2v7l-4-2z"/></g>`)}</div>
        <div class="cell">${icon(24, 22, svg`<g stroke="none"><path fill="#21a366" d="M6 0h9v11H6z"/><path fill="#33c481" d="M15 0h9v6h-9z"/><path fill="#107c41" d="M15 6h9v10h-9z"/><path fill="#185c37" d="M6 11h9v5h9v6H6z"/><path fill="#107c41" d="M0 4h14v14H0z"/><text x="7" y="15" text-anchor="middle" font-size="11" font-weight="700" fill="#fff">X</text></g>`)}</div>
        <div class="cell open last">${icon(23, 22, svg`<path fill="#fff" stroke="none" d="M0 0h23v22H0z"/><path stroke="#3c7896" d="M11.500 7v8M7.500 11h8M11.500 1v4M9.500 3h4M11.500 17v4M9.500 19h4M1 11h4M3 9v4M18 11h4M20 9v4M6 4v4M4 6h4M17 4v4M15 6h4M6 14v4M4 16h4M17 14v4M15 16h4"/>`)}</div>
        <span class="grow"></span>
        <div class="tray row">
          ${icon(38, 16, people)}
          ${icon(23, 8, svg`<path stroke-width="1.300" d="m.5 7 5.500-6 5.500 6"/>`)}
          ${icon(25, 16, svg`<path d="M1 5h13v9H1z" stroke="#777" stroke-dasharray="2 1"/><path stroke="#b8d96a" stroke-width="2" d="M5 2h6"/><circle cx="7.500" cy="10" r="2.500"/><circle cx="7.500" cy="10" r=".8"/>`)}
          ${t("ENG", 23)}
          <div class="clock">${t("10:55 AM", 49)}${t("17-May-22", 57)}</div>
          ${icon(16, 17, svg`<path fill="#fff" stroke="none" d="M0 1h16v12h-5l-3 3v-3H0z"/><path stroke="#14171a" d="M3 4.500h10M3 7.500h10M3 10.500h6"/>`)}
          <i class="peek"></i>
        </div>
      </div>
    `;
  }
}
